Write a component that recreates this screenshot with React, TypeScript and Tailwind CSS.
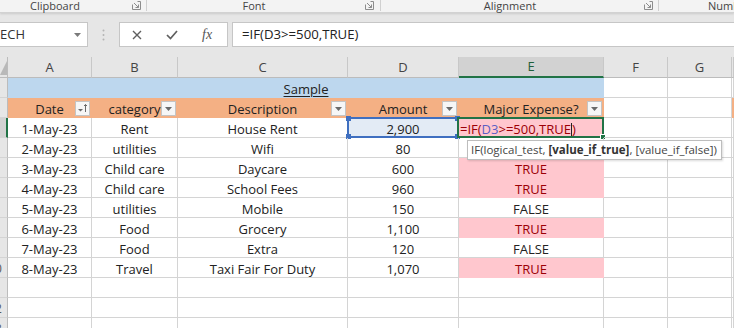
import React from 'react';

const colW = ['w-[84px]', 'w-[86px]', 'w-[170px]', 'w-[111px]', 'w-[145px]', 'w-[64px]', 'w-[64px]', 'flex-1'];
const letters = ['A', 'B', 'C', 'D', 'E', 'F', 'G', ''];

type Row = { date: string; cat: string; desc: string; amt: string; major: boolean };

const rows: Row[] = [
  { date: '1-May-23', cat: 'Rent', desc: 'House Rent', amt: '2,900', major: true },
  { date: '2-May-23', cat: 'utilities', desc: 'Wifi', amt: '80', major: false },
  { date: '3-May-23', cat: 'Child care', desc: 'Daycare', amt: '600', major: true },
  { date: '4-May-23', cat: 'Child care', desc: 'School Fees', amt: '960', major: true },
  { date: '5-May-23', cat: 'utilities', desc: 'Mobile', amt: '150', major: false },
  { date: '6-May-23', cat: 'Food', desc: 'Grocery', amt: '1,100', major: true },
  { date: '7-May-23', cat: 'Food', desc: 'Extra', amt: '120', major: false },
  { date: '8-May-23', cat: 'Travel', desc: 'Taxi Fair For Duty', amt: '1,070', major: true },
];

const Launcher = () => (
  <svg width="9" height="9" viewBox="0 0 9 9" fill="none" stroke="#8c8c8c" strokeWidth="1">
    <path d="M0.5 3.5 V8.5 H8.5 V0.5 H5.5" />
    <path d="M2 2 L6.5 6.5 M6.5 3.5 V6.5 H3.5" />
  </svg>
);

const RowHead = ({ n, active }: { n: number; active?: boolean }) => (
  <div
    className={`w-[8px] h-full overflow-hidden flex items-center pt-[3px] border-b border-[#d4d4d4] text-[12px] text-[#555] ${
      active ? 'bg-[#d2d2d2] border-r-2 border-r-[#217346]' : 'bg-[#e6e6e6] border-r border-r-[#bcbcbc]'
    }`}
  >
    <div className="w-[26px] -ml-[18px] text-center shrink-0">{n}</div>
  </div>
);

const FilterBtn = ({ sorted }: { sorted?: boolean }) => (
  <div className="absolute right-[1px] bottom-[1px] w-[15px] h-[15px] bg-[#f6f6f6] border border-[#c4c4c4] flex items-center justify-center">
    {sorted ? (
      <svg width="13" height="13" viewBox="0 0 13 13">
        <path d="M2 7 H7 L4.5 9.5 Z" fill="#6a6a6a" />
        <path d="M9.5 2.5 V10 M8 4 L9.5 2.5 L11 4" stroke="#6a6a6a" strokeWidth="1" fill="none" />
      </svg>
    ) : (
      <svg width="9" height="6" viewBox="0 0 9 6">
        <path d="M1 1 H8 L4.5 5 Z" fill="#6a6a6a" />
      </svg>
    )}
  </div>
);

const Cell = ({
  i,
  children,
  className = '',
}: {
  i: number;
  children?: React.ReactNode;
  className?: string;
}) => (
  <div
    className={`${colW[i]} h-full relative flex items-center justify-center pt-[5px] whitespace-nowrap border-r border-b ${
      className || 'border-[#d4d4d4]'
    }`}
  >
    {children}
  </div>
);

export default function App() {
  return (
    <div className="w-[734px] h-[328px] overflow-hidden relative bg-[#e6e6e6] font-['Open_Sans',sans-serif] text-[#222]">
      {/* ribbon group labels */}
      <div className="h-[13px] bg-[#f3f3f3] border-b border-[#d2d2d2] shadow-[0_1px_2px_rgba(0,0,0,0.12)] flex items-start text-[11px] leading-[12px] text-[#444]">
        <div className="w-[147px] shrink-0 flex items-start border-r border-[#d0d0d0] h-[11px]">
          <span className="w-[110px] text-center">Clipboard</span>
          <span className="ml-[22px] mt-[1px]"><Launcher /></span>
        </div>
        <div className="w-[234px] shrink-0 flex items-start border-r border-[#d0d0d0] h-[11px]">
          <span className="w-[214px] text-center">Font</span>
          <span className="ml-[4px] mt-[1px]"><Launcher /></span>
        </div>
        <div className="w-[278px] shrink-0 flex items-start border-r border-[#d0d0d0] h-[11px]">
          <span className="w-[258px] text-center">Alignment</span>
          <span className="ml-[5px] mt-[1px]"><Launcher /></span>
        </div>
        <div className="shrink-0 pl-[49px] whitespace-nowrap">Numb</div>
      </div>

      {/* formula bar */}
      <div className="flex items-center h-[25px] mt-[9px]">
        <div className="w-[88px] h-full bg-white border border-l-0 border-[#c6c6c6] flex items-center justify-between pr-[6px]">
          <span className="text-[13px] text-[#333]">ECH</span>
          <svg width="7" height="4" viewBox="0 0 7 4">
            <path d="M0 0 H7 L3.5 4 Z" fill="#7a7a7a" />
          </svg>
        </div>
        <div className="w-[31px] flex justify-center">
          <svg width="3" height="12" viewBox="0 0 3 12" fill="#b4b4b4">
            <circle cx="1.5" cy="1.5" r="1" />
            <circle cx="1.5" cy="6" r="1" />
            <circle cx="1.5" cy="10.5" r="1" />
          </svg>
        </div>
        <div className="w-[109px] h-full bg-white border border-[#c6c6c6] flex items-center pl-[12px] gap-[24px]">
          <svg width="10" height="10" viewBox="0 0 10 10" stroke="#5f5f5f" strokeWidth="1.4">
            <path d="M1 1 L9 9 M9 1 L1 9" />
          </svg>
          <svg width="12" height="10" viewBox="0 0 12 10" fill="none" stroke="#5f5f5f" strokeWidth="1.7">
            <path d="M1 5 L4.5 8.5 L11 1" />
          </svg>
          <span className="font-['Liberation_Serif',serif] italic text-[14px] text-[#555] leading-none">fx</span>
        </div>
        <div className="w-[4px]" />
        <div className="flex-1 h-full bg-white border border-r-0 border-[#c6c6c6] flex items-center pl-[9px] text-[13.2px] text-[#222]">
          =IF(D3&gt;=500,TRUE)
        </div>
      </div>

      {/* sheet */}
      <div className="mt-[10px] flex flex-col text-[13px]">
        {/* column headers */}
        <div className="flex h-[21px] bg-[#e6e6e6] text-[#444]">
          <div className="w-[8px] h-full border-r border-b border-[#bcbcbc] flex items-end">
            <svg width="7" height="20" viewBox="0 0 7 20">
              <path d="M7 4 V18 H0 Z" fill="#b9b9b9" />
            </svg>
          </div>
          {letters.map((l, i) => (
            <div
              key={i}
              className={`${colW[i]} h-full flex items-center justify-center pt-[1px] border-r border-[#c8c8c8] ${
                l === 'E' ? 'bg-[#d2d2d2] border-b-2 border-b-[#217346] text-[#1f5f3b]' : 'border-b border-b-[#bcbcbc]'
              }`}
            >
              {l}
            </div>
          ))}
        </div>

        {/* row 1: merged title */}
        <div className="flex h-[20px] bg-white">
          <RowHead n={1} />
          <div className="w-[596px] h-full bg-[#bdd7ee] flex items-center justify-center pt-[4px]">
            <span className="underline underline-offset-2">Sample</span>
          </div>
          <Cell i={5} />
          <Cell i={6} />
          <Cell i={7} />
        </div>

        {/* row 2: headers */}
        <div className="flex h-[20px] bg-white">
          <RowHead n={2} />
          <Cell i={0} className="bg-[#f4b084] border-[#f4b084]">Date<FilterBtn sorted /></Cell>
          <Cell i={1} className="bg-[#f4b084] border-[#f4b084]">category<FilterBtn /></Cell>
          <Cell i={2} className="bg-[#f4b084] border-[#f4b084]">Description<FilterBtn /></Cell>
          <Cell i={3} className="bg-[#f4b084] border-[#f4b084]">Amount<FilterBtn /></Cell>
          <Cell i={4} className="bg-[#f4b084] border-[#f4b084]">Major Expense?<FilterBtn /></Cell>
          <Cell i={5} />
          <Cell i={6} />
          <Cell i={7} className="bg-[#f4b084] border-[#f4b084]" />
        </div>

        {/* data rows */}
        {rows.map((r, idx) => {
          const first = idx === 0;
          return (
            <div key={idx} className="flex h-[20px] bg-white">
              <RowHead n={idx + 3} active={first} />
              <Cell i={0}>{r.date}</Cell>
              <Cell i={1}>{r.cat}</Cell>
              <Cell i={2}>{r.desc}</Cell>
              <Cell i={3} className={first ? 'bg-[#e3ebf5] border-[#d4d4d4]' : ''}>
                {r.amt}
                {first && (
                  <div className="absolute -left-[1px] -top-[1px] -right-[1px] -bottom-[1px] border-2 border-[#3f6fc0]">
                    <div className="absolute -left-[3px] -top-[3px] w-[5px] h-[5px] bg-[#3f6fc0]" />
                    <div className="absolute -right-[3px] -top-[3px] w-[5px] h-[5px] bg-[#3f6fc0]" />
                    <div className="absolute -left-[3px] -bottom-[3px] w-[5px] h-[5px] bg-[#3f6fc0]" />
                    <div className="absolute -right-[3px] -bottom-[3px] w-[5px] h-[5px] bg-[#3f6fc0]" />
                  </div>
                )}
              </Cell>
              {first ? (
                <Cell i={4} className="bg-[#ffc7ce] border-[#ffc7ce] !justify-start">
                  <span className="pl-[1px] text-[#9c0006] flex items-center">
                    =IF(<span className="text-[#5b5fc4]">D3</span>&gt;=500,TRUE
                    <span className="inline-block w-[1px] h-[15px] bg-[#222]" />)
                  </span>
                  <div className="absolute -left-[2px] -top-[1px] -right-[1px] -bottom-[1px] border-2 border-[#217346]">
                    <div className="absolute -right-[4px] -bottom-[4px] w-[6px] h-[6px] bg-[#217346] border border-white" />
                  </div>
                </Cell>
              ) : idx === 1 ? (
                <Cell i={4} />
              ) : r.major ? (
                <Cell i={4} className="bg-[#ffc7ce] border-[#ffc7ce] text-[#9c0006]">TRUE</Cell>
              ) : (
                <Cell i={4}>FALSE</Cell>
              )}
              <Cell i={5} />
              <Cell i={6} />
              <Cell i={7} />
            </div>
          );
        })}

        {[11, 12, 13, 14].map((n) => (
          <div key={n} className="flex h-[20px] bg-white">
            <RowHead n={n} />
            {colW.map((_, i) => (
              <Cell key={i} i={i} />
            ))}
          </div>
        ))}
      </div>

      {/* function tooltip */}
      <div className="absolute left-[467px] top-[140px] h-[20px] w-[255px] bg-white border border-[#bdbdbd] shadow-[1px_1px_2px_rgba(0,0,0,0.15)] flex items-center px-[3px] text-[11.5px] text-[#444] whitespace-nowrap">
        IF(logical_test, <span className="font-bold text-[#333] ml-[3px]">[value_if_true]</span>, [value_if_false])
      </div>
    </div>
  );
}
